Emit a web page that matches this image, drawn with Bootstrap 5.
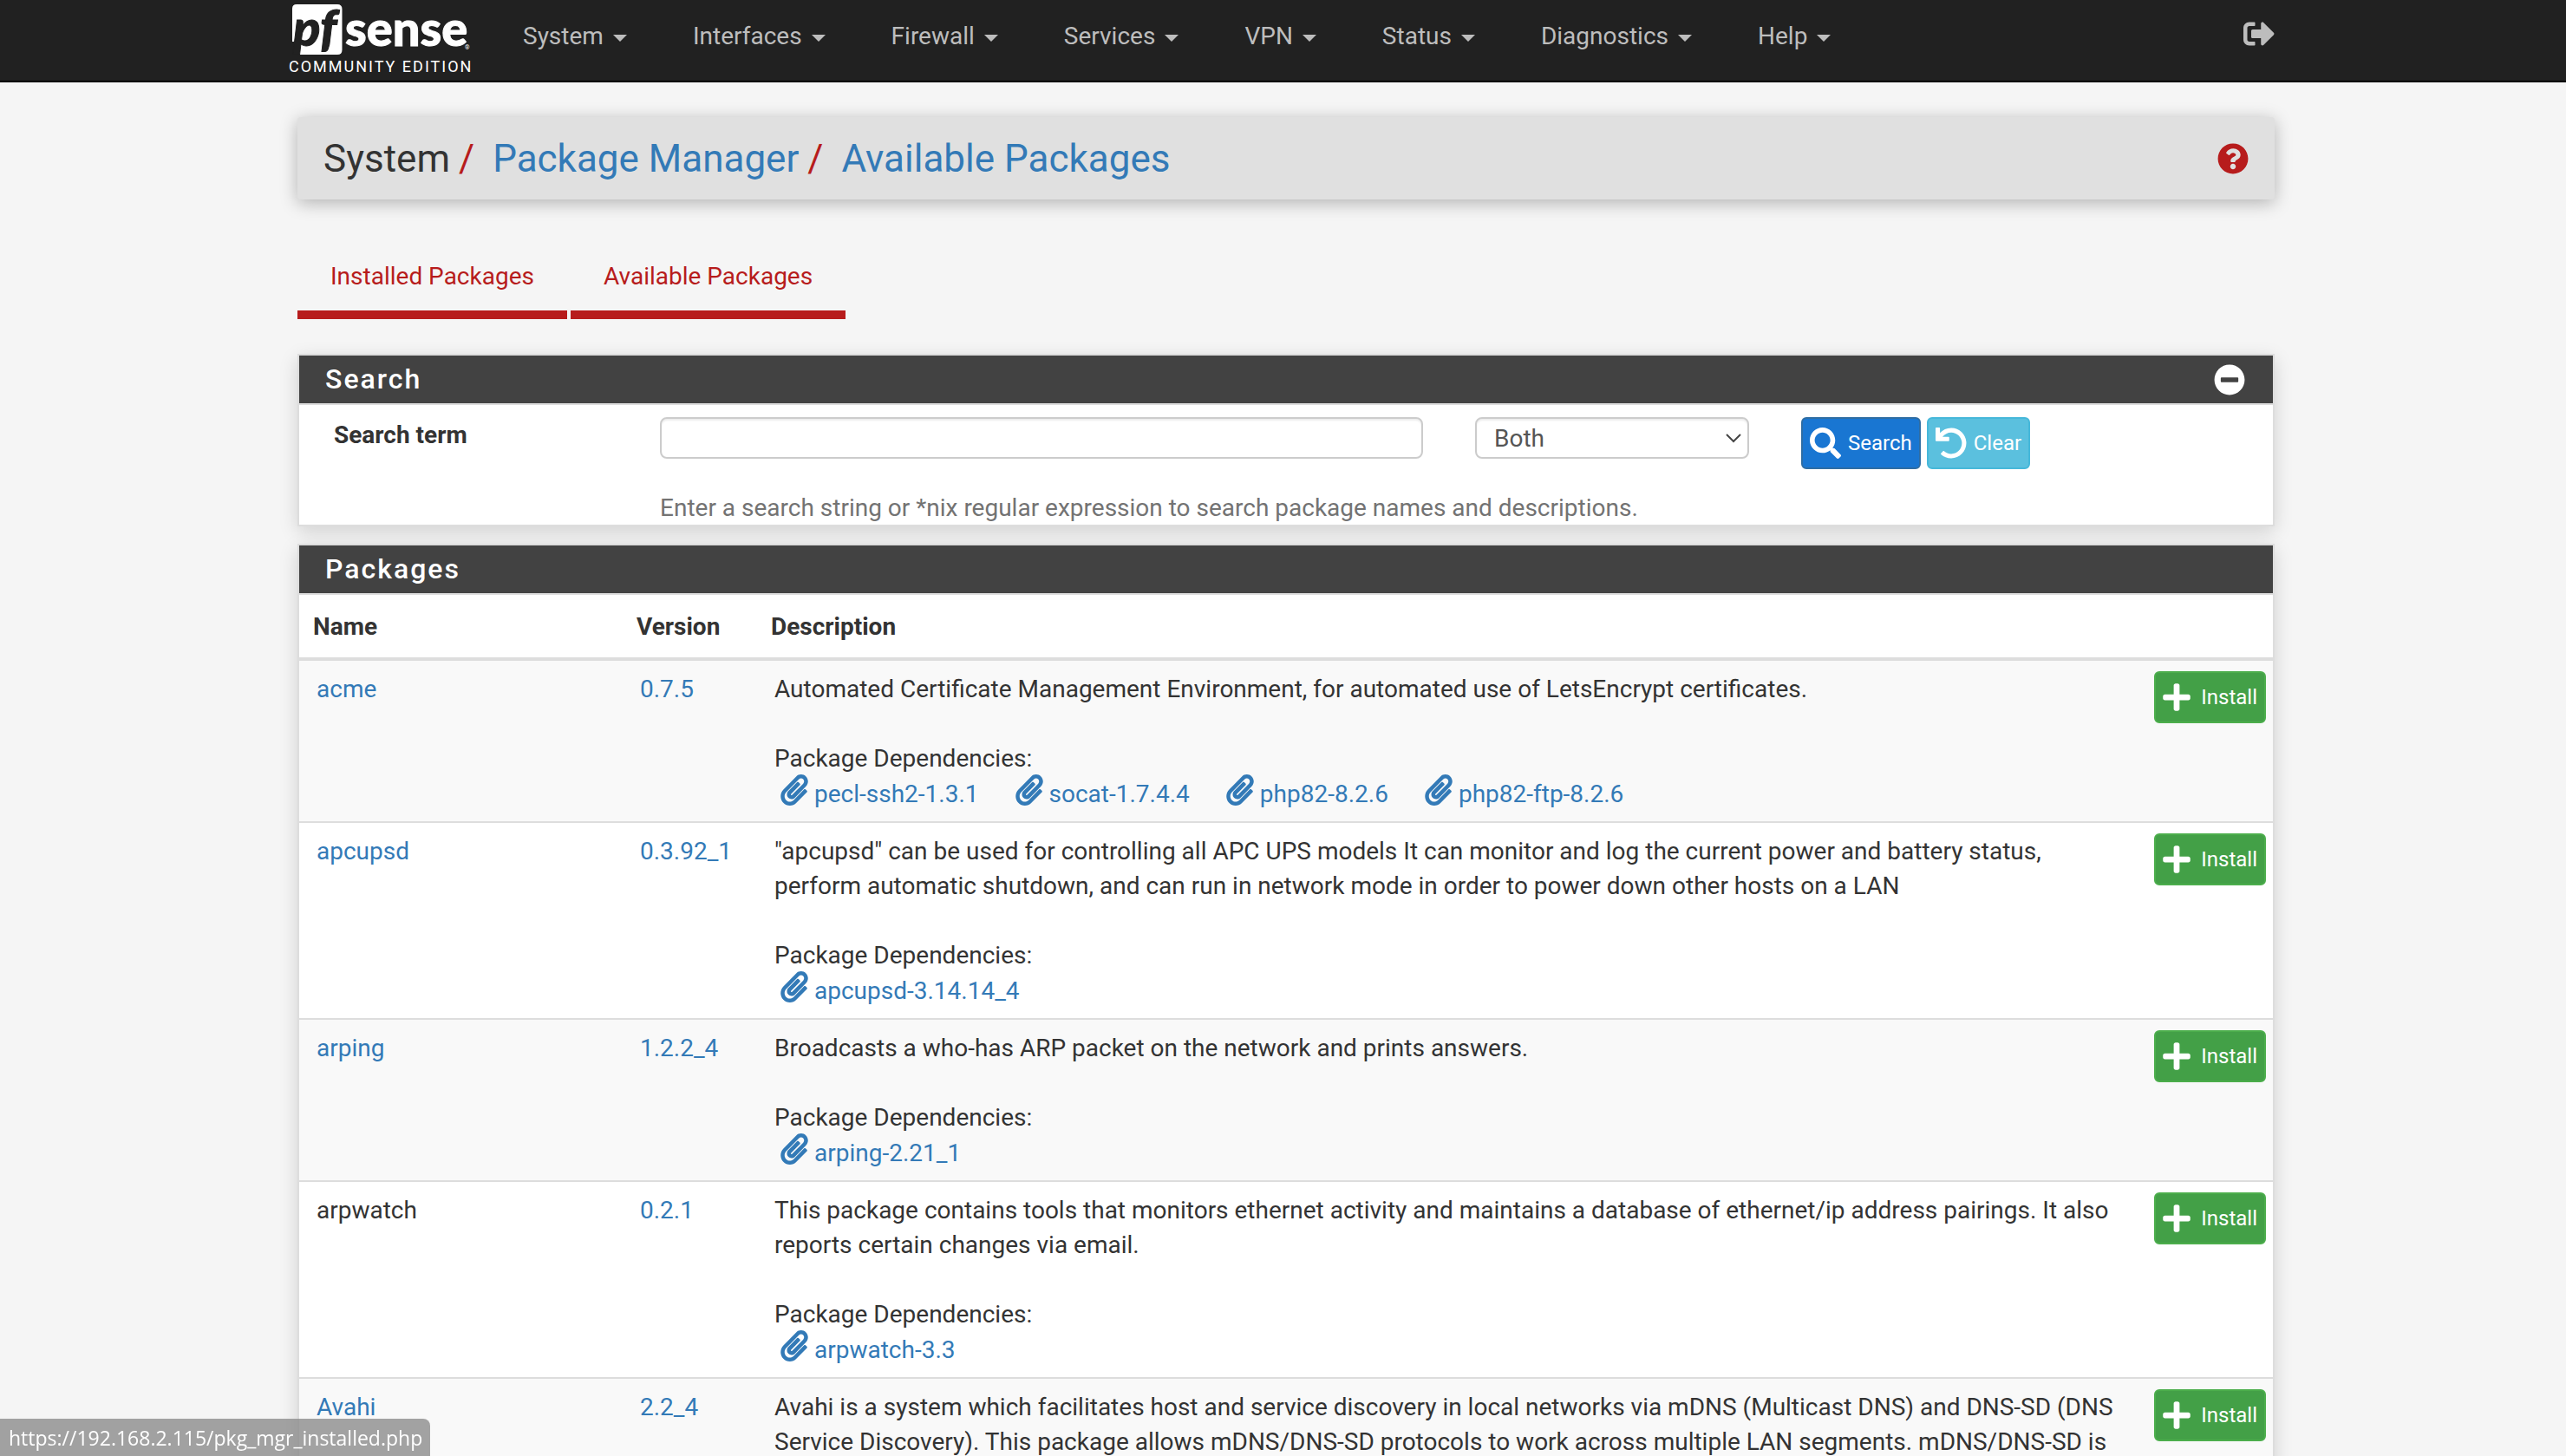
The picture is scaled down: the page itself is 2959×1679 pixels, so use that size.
<!DOCTYPE html>
<html lang="en">
<head>
<meta charset="utf-8">
<meta name="viewport" content="width=device-width, initial-scale=1">
<title>pfSense - System: Package Manager: Available Packages</title>
<link href="https://cdn.jsdelivr.net/npm/bootstrap@5.3.0/dist/css/bootstrap.min.css" rel="stylesheet">
<style>
:root{--pf-red:#b71c1c;--pf-link:#337ab7;--pf-line:#ddd}
body{font-family:Roboto,"Liberation Sans",sans-serif;font-size:28px;line-height:40px;color:#333;background:#f5f5f5;height:100vh;overflow:hidden}
a{color:var(--pf-link);text-decoration:none}
.icon{fill:currentColor;flex:none}
.page-shift{padding-left:7px}
.page-wrap{max-width:2340px;margin:0 auto;padding:0 30px}
.topnav{background:#212121;border-bottom:2px solid #000;height:95px}
.topnav .page-wrap{height:93px}
.brand{width:212px;margin-left:-10px;color:#fff}
.brand svg{display:block;overflow:visible}
.brand-sub{font-size:18px;line-height:22px;letter-spacing:2px;white-space:nowrap}
.menu{margin-left:28px}
.menu .nav-link{color:#bdbdbd;padding:22px 30px 31px;margin-right:15px;line-height:40px}
.menu .dropdown-toggle::after{border-width:8px;border-bottom:0;margin-left:11px;margin-right:1px;vertical-align:3px}
.logout{color:#bdbdbd;margin-top:21px}
.crumbs{background:#e0e0e0;margin-top:40px;padding:0 30px;height:95px;border-radius:4px;font-size:44px;line-height:52px;box-shadow:0 4px 20px rgba(0,0,0,.28)}
.crumbs li+li::before{content:"/";color:var(--pf-red);padding:0 21px 0 10px}
.help-link{color:var(--pf-red);line-height:0}
.tabs{margin-top:48px;gap:4px}
.tabs .nav-link{color:var(--pf-red);padding:21px 38px 19px;border-bottom:10px solid var(--pf-red)}
.panel{background:#fff;border:2px solid var(--pf-line);box-shadow:0 6px 20px rgba(0,0,0,.15)}
.tabs + .panel{margin-top:40px}
.panel + .panel{margin-top:20px}
.panel-head{background:#424242;color:#fff;border-bottom:2px solid var(--pf-line);height:57px;padding:0 30px}
.panel-head h2{font-size:32px;line-height:55px;font-weight:500;letter-spacing:2px;margin:0}
.panel-head button{color:#fff;background:none;border:0;padding:0;line-height:0;margin-right:2px}
.search-body{padding:14px 40px 0}
.search-body label{width:376px;font-weight:700;line-height:42px}
.field{height:48px;border:2px solid #ccc;border-radius:8px;font-size:28px;line-height:40px;color:#555;padding:0 20px;box-shadow:inset 0 2px 2px rgba(0,0,0,.075)}
.term{width:880px}
.kind{width:316px;margin:0 60px;padding:1px 20px 0;background-image:none}
.kind-box{position:relative}
.kind-box svg{position:absolute;right:68px;top:18px;pointer-events:none}
.btn-pf{--bs-btn-color:#fff;--bs-btn-hover-color:#fff;--bs-btn-padding-x:8px;--bs-btn-padding-y:0;--bs-btn-font-size:24px;--bs-btn-line-height:36px;--bs-btn-border-width:2px;--bs-btn-border-radius:6px;height:60px;display:inline-flex;align-items:center;gap:8px}
.btn-find{--bs-btn-bg:#1976d2;--bs-btn-border-color:#2e6da4}
.btn-reset{--bs-btn-bg:#5bc0de;--bs-btn-border-color:#46b8da;margin-left:7px}
.btn-add{--bs-btn-bg:#43a047;--bs-btn-border-color:#4cae4c;gap:12px}
.hint{color:#737373;margin:25px 0 0 376px;height:39px}
.pkg{--bs-table-striped-bg:#f9f9f9;--bs-table-striped-color:#333;--bs-table-color:#333;--bs-table-bg:#fff;margin:0;table-layout:fixed;border-collapse:separate;border-spacing:0}
.pkg th{padding:17px 15px 15px;border-bottom:4px solid var(--pf-line);font-weight:700}
.pkg td{padding:13px 19px 11px;border-bottom:2px solid var(--pf-line)}
.pkg th:first-child{padding-left:16px}
.pkg td:first-child{padding-left:20px}
.pkg td:last-child{padding:12px 8px;text-align:right}
.c-name{width:374px}.c-ver{width:155px}.c-act{width:155px}
.deps{gap:42px;padding:1px 0 0 7px}
.deps a{display:flex;gap:7px}
.deps svg{margin-top:-3px}
.status-tip{position:fixed;left:0;bottom:0;z-index:5;background:rgba(140,140,140,.8);color:#fff;font-family:"Open Sans","Noto Sans",sans-serif;font-size:23px;line-height:42px;padding:1px 9px 0 10px;border-top-right-radius:8px}
</style>
<script src="https://cdn.jsdelivr.net/npm/bootstrap@5.3.0/dist/js/bootstrap.bundle.min.js"></script>
</head>
<body>
<svg width="0" height="0" class="position-absolute" aria-hidden="true">
<symbol id="i-clip" viewBox="0 0 448 512"><path d="M43.246 466.142c-58.43-60.289-57.341-157.511 1.386-217.581L254.392 34c44.316-45.332 116.351-45.336 160.671 0 43.89 44.894 43.943 117.329 0 162.276L232.214 383.128c-29.855 30.537-78.633 30.111-107.982-.998-28.275-29.97-27.368-77.473 1.452-106.953l143.743-146.835c6.182-6.314 16.312-6.422 22.626-.241l22.861 22.379c6.315 6.182 6.422 16.312.241 22.626L171.427 319.927c-4.932 5.045-5.236 13.428-.648 18.292 4.372 4.634 11.245 4.711 15.688.165l182.849-186.851c19.613-20.062 19.613-52.725-.011-72.798-19.189-19.627-49.957-19.637-69.154 0L90.39 293.295c-34.763 35.56-35.299 93.12-1.191 128.313 34.01 35.093 88.985 35.137 123.058.286l172.06-175.999c6.177-6.319 16.307-6.433 22.626-.256l22.877 22.364c6.319 6.177 6.434 16.307.256 22.626l-172.06 175.998c-59.576 60.938-155.943 60.216-214.77-.485z"/></symbol>
<symbol id="i-plus" viewBox="0 0 448 512"><path d="M416 208H272V64c0-17.67-14.33-32-32-32h-32c-17.67 0-32 14.33-32 32v144H32c-17.67 0-32 14.33-32 32v32c0 17.67 14.33 32 32 32h144v144c0 17.67 14.33 32 32 32h32c17.67 0 32-14.33 32-32V304h144c17.67 0 32-14.33 32-32v-32c0-17.67-14.33-32-32-32z"/></symbol>
</svg>

<header class="topnav page-shift">
<div class="page-wrap d-flex align-items-start">
<a class="brand" href="#">
<svg width="212" height="66" viewBox="0 0 212 66" role="img" aria-label="pfSense">
<path fill="#fff" d="M9 5h47q5.500 0 5.500 5.500v47q0 5.500-5.500 5.500H10L14 48H4V10Q4 5 9 5z"/>
<text x="5" y="53" font-family="Lato" font-weight="900" font-style="italic" font-size="58" fill="#212121" stroke="#212121">pf</text>
<text x="65" y="53" font-family="Lato" font-weight="900" font-size="56" fill="#fff" stroke="#fff">sense</text>
<text x="203" y="57" font-family="Roboto" font-size="7" fill="#fff">®</text>
</svg>
<div class="brand-sub">COMMUNITY EDITION</div>
</a>
<nav class="menu nav flex-nowrap">
<a class="nav-link dropdown-toggle" href="#">System</a>
<a class="nav-link dropdown-toggle" href="#">Interfaces</a>
<a class="nav-link dropdown-toggle" href="#">Firewall</a>
<a class="nav-link dropdown-toggle" href="#">Services</a>
<a class="nav-link dropdown-toggle" href="#">VPN</a>
<a class="nav-link dropdown-toggle" href="#">Status</a>
<a class="nav-link dropdown-toggle" href="#">Diagnostics</a>
<a class="nav-link dropdown-toggle" href="#">Help</a>
</nav>
<a class="logout ms-auto d-flex" href="#" aria-label="Logout"><svg class="icon" width="36" height="36" viewBox="0 0 512 512"><path d="M497 273L329 441c-15 15-41 4.500-41-17v-96H152c-13.300 0-24-10.700-24-24v-96c0-13.300 10.700-24 24-24h136V88c0-21.400 25.900-32 41-17l168 168c9.300 9.400 9.300 24.600 0 34zM192 436v-40c0-6.600-5.400-12-12-12H96c-17.700 0-32-14.300-32-32V160c0-17.700 14.300-32 32-32h84c6.600 0 12-5.400 12-12V76c0-6.600-5.400-12-12-12H96c-53 0-96 43-96 96v192c0 53 43 96 96 96h84c6.600 0 12-5.400 12-12z"/></svg></a>
</div>
</header>

<div class="page-shift">
<main class="page-wrap">
<div class="crumbs d-flex align-items-center justify-content-between">
<ol class="list-unstyled d-flex m-0"><li>System</li><li><a href="#">Package Manager</a></li><li><a href="#">Available Packages</a></li></ol>
<a class="help-link" href="#" aria-label="Help"><svg class="icon" width="36" height="36" viewBox="0 0 512 512"><path d="M504 256c0 136.997-111.043 248-248 248S8 392.997 8 256C8 119.083 119.043 8 256 8s248 111.083 248 248zM262.655 90c-54.497 0-89.255 22.957-116.549 63.758-3.536 5.286-2.353 12.415 2.715 16.258l34.699 26.31c5.205 3.947 12.621 3.008 16.665-2.122 17.864-22.658 30.113-35.797 57.303-35.797 20.429 0 45.698 13.148 45.698 32.958 0 14.976-12.363 22.667-32.534 33.976C247.128 238.528 216 254.941 216 296v4c0 6.627 5.373 12 12 12h56c6.627 0 12-5.373 12-12v-1.333c0-28.462 83.186-29.647 83.186-106.667 0-58.002-60.165-102-116.531-102zM256 338c-25.365 0-46 20.635-46 46 0 25.364 20.635 46 46 46s46-20.636 46-46c0-25.365-20.635-46-46-46z"/></svg></a>
</div>

<nav class="tabs nav">
<a class="nav-link" href="#">Installed Packages</a>
<a class="nav-link" href="#">Available Packages</a>
</nav>

<section class="panel">
<div class="panel-head d-flex align-items-center justify-content-between"><h2>Search</h2><button type="button" aria-label="Collapse"><svg class="icon" width="36" height="36" viewBox="0 0 512 512"><path d="M256 8C119 8 8 119 8 256s111 248 248 248 248-111 248-248S393 8 256 8zM124 296c-6.600 0-12-5.400-12-12v-56c0-6.600 5.400-12 12-12h264c6.600 0 12 5.400 12 12v56c0 6.600-5.400 12-12 12H124z"/></svg></button></div>
<form class="search-body">
<div class="d-flex align-items-start">
<label for="term">Search term</label>
<input id="term" type="text" class="form-control field term">
<div class="kind-box"><select class="form-select field kind" aria-label="Search in"><option>Name</option><option>Description</option><option selected>Both</option></select><svg width="20" height="14" viewBox="0 0 20 14"><path d="M2 2l8 8 8-8" fill="none" stroke="#444" stroke-width="2"/></svg></div>
<button type="button" class="btn btn-pf btn-find"><svg class="icon" width="36" height="36" viewBox="0 0 512 512"><path d="M505 442.700L405.300 343c-4.500-4.500-10.600-7-17-7H372c27.600-35.300 44-79.700 44-128C416 93.100 322.900 0 208 0S0 93.100 0 208s93.100 208 208 208c48.300 0 92.700-16.400 128-44v16.300c0 6.400 2.500 12.500 7 17l99.700 99.700c9.400 9.400 24.600 9.400 33.900 0l28.300-28.300c9.400-9.400 9.400-24.600.1-34zM208 336c-70.700 0-128-57.200-128-128 0-70.700 57.200-128 128-128 70.700 0 128 57.200 128 128 0 70.700-57.200 128-128 128z"/></svg>Search</button>
<button type="button" class="btn btn-pf btn-reset"><svg class="icon" width="36" height="36" viewBox="0 0 512 512"><path d="M212.333 224.333H12c-6.627 0-12-5.373-12-12V12C0 5.373 5.373 0 12 0h48c6.627 0 12 5.373 12 12v78.112C117.773 39.279 184.26 7.47 258.175 8.007c136.906.994 246.448 111.623 246.157 248.532C504.041 393.258 393.12 504 256.333 504c-64.089 0-122.496-24.313-166.51-64.215-5.099-4.622-5.334-12.554-.467-17.42l33.967-33.967c4.474-4.474 11.662-4.717 16.401-.525C170.76 415.336 211.58 432 256.333 432c97.268 0 176-78.716 176-176 0-97.267-78.716-176-176-176-58.496 0-110.28 28.476-142.274 72.333h98.274c6.627 0 12 5.373 12 12v48c0 6.627-5.373 12-12 12z"/></svg>Clear</button>
</div>
<p class="hint">Enter a search string or *nix regular expression to search package names and descriptions.</p>
</form>
</section>

<section class="panel">
<div class="panel-head"><h2>Packages</h2></div>
<table class="table table-striped pkg">
<thead><tr><th class="c-name">Name</th><th class="c-ver">Version</th><th>Description</th><th class="c-act"></th></tr></thead>
<tbody>
<tr><td><a href="#">acme</a></td><td><a href="#">0.7.5</a></td><td>Automated Certificate Management Environment, for automated use of LetsEncrypt certificates.<br><br>Package Dependencies:
<div class="deps d-flex"><a href="#"><svg class="icon" width="32" height="36"><use href="#i-clip"/></svg>pecl-ssh2-1.3.1</a><a href="#"><svg class="icon" width="32" height="36"><use href="#i-clip"/></svg>socat-1.7.4.4</a><a href="#"><svg class="icon" width="32" height="36"><use href="#i-clip"/></svg>php82-8.2.6</a><a href="#"><svg class="icon" width="32" height="36"><use href="#i-clip"/></svg>php82-ftp-8.2.6</a></div></td>
<td><button type="button" class="btn btn-pf btn-add"><svg class="icon" width="32" height="36"><use href="#i-plus"/></svg>Install</button></td></tr>
<tr><td><a href="#">apcupsd</a></td><td><a href="#">0.3.92_1</a></td><td>"apcupsd" can be used for controlling all APC UPS models It can monitor and log the current power and battery status, perform automatic shutdown, and can run in network mode in order to power down other hosts on a LAN<br><br>Package Dependencies:
<div class="deps d-flex"><a href="#"><svg class="icon" width="32" height="36"><use href="#i-clip"/></svg>apcupsd-3.14.14_4</a></div></td>
<td><button type="button" class="btn btn-pf btn-add"><svg class="icon" width="32" height="36"><use href="#i-plus"/></svg>Install</button></td></tr>
<tr><td><a href="#">arping</a></td><td><a href="#">1.2.2_4</a></td><td>Broadcasts a who-has ARP packet on the network and prints answers.<br><br>Package Dependencies:
<div class="deps d-flex"><a href="#"><svg class="icon" width="32" height="36"><use href="#i-clip"/></svg>arping-2.21_1</a></div></td>
<td><button type="button" class="btn btn-pf btn-add"><svg class="icon" width="32" height="36"><use href="#i-plus"/></svg>Install</button></td></tr>
<tr><td>arpwatch</td><td><a href="#">0.2.1</a></td><td>This package contains tools that monitors ethernet activity and maintains a database of ethernet/ip address pairings. It also reports certain changes via email.<br><br>Package Dependencies:
<div class="deps d-flex"><a href="#"><svg class="icon" width="32" height="36"><use href="#i-clip"/></svg>arpwatch-3.3</a></div></td>
<td><button type="button" class="btn btn-pf btn-add"><svg class="icon" width="32" height="36"><use href="#i-plus"/></svg>Install</button></td></tr>
<tr><td><a href="#">Avahi</a></td><td><a href="#">2.2_4</a></td><td>Avahi is a system which facilitates host and service discovery in local networks via mDNS (Multicast DNS) and DNS-SD (DNS Service Discovery). This package allows mDNS/DNS-SD protocols to work across multiple LAN segments. mDNS/DNS-SD is</td>
<td><button type="button" class="btn btn-pf btn-add"><svg class="icon" width="32" height="36"><use href="#i-plus"/></svg>Install</button></td></tr>
</tbody>
</table>
</section>
</main>
</div>
<div class="status-tip">https://192.168.2.115/pkg_mgr_installed.php</div>
</body>
</html>
